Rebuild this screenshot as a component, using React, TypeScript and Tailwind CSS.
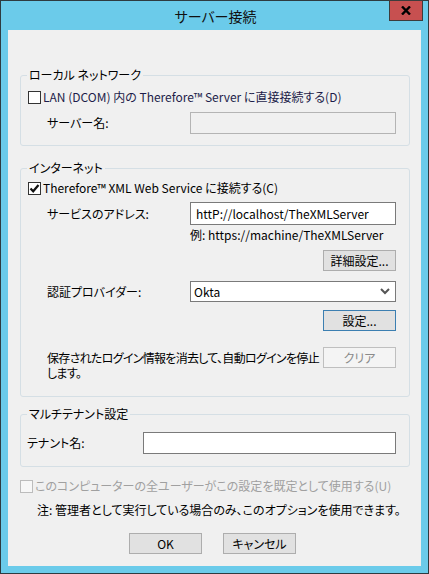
import React from 'react';

const CheckBox: React.FC<{ checked?: boolean; disabled?: boolean }> = ({ checked, disabled }) => (
  <div
    className={
      'w-[13px] h-[13px] border flex items-center justify-center shrink-0 ' +
      (disabled ? 'border-[#bcbcbc] bg-[#f7f7f7]' : 'border-[#333333] bg-white')
    }
  >
    {checked && (
      <svg width="11" height="11" viewBox="0 0 11 11">
        <path d="M1.5 5.5 L4.2 8.3 L9.5 2" fill="none" stroke="#111" strokeWidth="2.2" />
      </svg>
    )}
  </div>
);

const Button: React.FC<{ label: string; variant?: 'default' | 'focus' | 'disabled'; className?: string }> = ({
  label,
  variant = 'default',
  className = '',
}) => {
  const look =
    variant === 'focus'
      ? 'border-[#3c7fb1] bg-[#e1e1e1] text-black'
      : variant === 'disabled'
      ? 'border-[#bfbfbf] bg-[#f4f4f4] text-[#8a8a8a]'
      : 'border-[#adadad] bg-[#e1e1e1] text-black';
  return (
    <div className={'h-[21px] w-[73px] shrink-0 border flex items-center justify-center text-[12px] ' + look + ' ' + className}>
      {label}
    </div>
  );
};

const GroupBox: React.FC<{ title: string; className?: string; children: React.ReactNode }> = ({
  title,
  className = '',
  children,
}) => (
  <fieldset className={'border border-[#d5dfe5] rounded-[3px] ' + className}>
    <legend className="ml-[6px] px-[2px] leading-[16px]">{title}</legend>
    {children}
  </fieldset>
);

export default function App() {
  return (
    <div className="w-[429px] h-[574px] bg-[#6bcbea] border border-[#2e3b40] flex flex-col text-[12px] leading-[16px] text-black select-none font-['Noto_Sans_CJK_JP','Noto_Sans',sans-serif] [font-feature-settings:'palt']">
      {/* title bar */}
      <div className="relative h-[29px] flex items-center justify-center shrink-0">
        <span className="text-[14px] text-[#111] mt-[1px] ml-[2px]">サーバー接続</span>
        <div className="absolute right-[5px] top-[-1px] w-[34px] h-[21px] bg-[#c75050] border border-[#3c3c3c] flex items-center justify-center">
          <svg width="10" height="9" viewBox="0 0 10 9">
            <path d="M1 0.5 L9 8.5 M9 0.5 L1 8.5" stroke="#000" strokeWidth="2.4" />
          </svg>
        </div>
      </div>

      {/* client */}
      <div className="mx-[7px] h-[536px] bg-[#f0f0f0] flex flex-col pl-[12px] pr-[11px]">
        <GroupBox title="ローカル ネットワーク" className="mt-[37px] pb-[11px]">
          <div className="mt-[6px] ml-[7px] h-[16px] flex items-center gap-[2px]">
            <CheckBox />
            <span className="text-[#1d1d4a] whitespace-nowrap">LAN (DCOM) 内の Therefore™ Server に直接接続する(D)</span>
          </div>
          <div className="mt-[7px] flex items-center">
            <span className="ml-[26px] w-[143px]">サーバー名:</span>
            <div className="w-[206px] h-[22px] border border-[#b4b4b4] bg-[#f0f0f0]" />
          </div>
        </GroupBox>

        <GroupBox title="インターネット" className="mt-[14px] pb-[16px]">
          <div className="mt-[4px] ml-[7px] h-[16px] flex items-center gap-[2px]">
            <CheckBox checked />
            <span className="whitespace-nowrap">Therefore™ XML Web Service に接続する(C)</span>
          </div>
          <div className="mt-[6px] flex items-center">
            <span className="ml-[26px] w-[143px]">サービスのアドレス:</span>
            <div className="w-[206px] h-[23px] border border-[#7a7a7a] bg-white flex items-center px-[5px]">
              httP://localhost/TheXMLServer
            </div>
          </div>
          <div className="mt-[2px] ml-[169px] h-[16px] flex items-center whitespace-nowrap">例: https://machine/TheXMLServer</div>
          <div className="mt-[7px] flex justify-end pr-[13px]">
            <Button label="詳細設定..." />
          </div>
          <div className="mt-[10px] flex items-center">
            <span className="ml-[26px] w-[143px]">認証プロバイダー:</span>
            <div className="w-[206px] h-[21px] border border-[#7a7a7a] bg-white flex items-center justify-between pl-[3px] pr-[5px]">
              <span>Okta</span>
              <svg width="10" height="7" viewBox="0 0 10 7">
                <path d="M1 1 L5 5 L9 1" fill="none" stroke="#555" strokeWidth="2" />
              </svg>
            </div>
          </div>
          <div className="mt-[8px] flex justify-end pr-[13px]">
            <Button label="設定..." variant="focus" />
          </div>
          <div className="mt-[16px] flex items-start">
            <div className="ml-[26px] w-[276px] mt-[3px] leading-[15px] whitespace-nowrap tracking-[-0.7px] flex flex-col">
              <span>保存されたログイン情報を消去して、自動ログインを停止</span>
              <span>します。</span>
            </div>
            <Button label="クリア" variant="disabled" />
          </div>
        </GroupBox>

        <GroupBox title="マルチテナント設定" className="mt-[9px] pb-[12px]">
          <div className="mt-[10px] flex items-center">
            <span className="ml-[6px] w-[116px]">テナント名:</span>
            <div className="w-[253px] h-[22px] border border-[#7a7a7a] bg-white" />
          </div>
        </GroupBox>

        <div className="mt-[11px] h-[16px] flex items-center gap-[2px]">
          <CheckBox disabled />
          <span className="text-[#a0a0a0] whitespace-nowrap">このコンピューターの全ユーザーがこの設定を既定として使用する(U)</span>
        </div>
        <div className="mt-[8px] ml-[17px] h-[16px] flex items-center whitespace-nowrap">
          注: 管理者として実行している場合のみ、このオプションを使用できます。
        </div>
        <div className="mt-[15px] ml-[109px] flex gap-[21px]">
          <Button label="OK" className="w-[72px]" />
          <Button label="キャンセル" className="w-[72px]" />
        </div>
      </div>
    </div>
  );
}
